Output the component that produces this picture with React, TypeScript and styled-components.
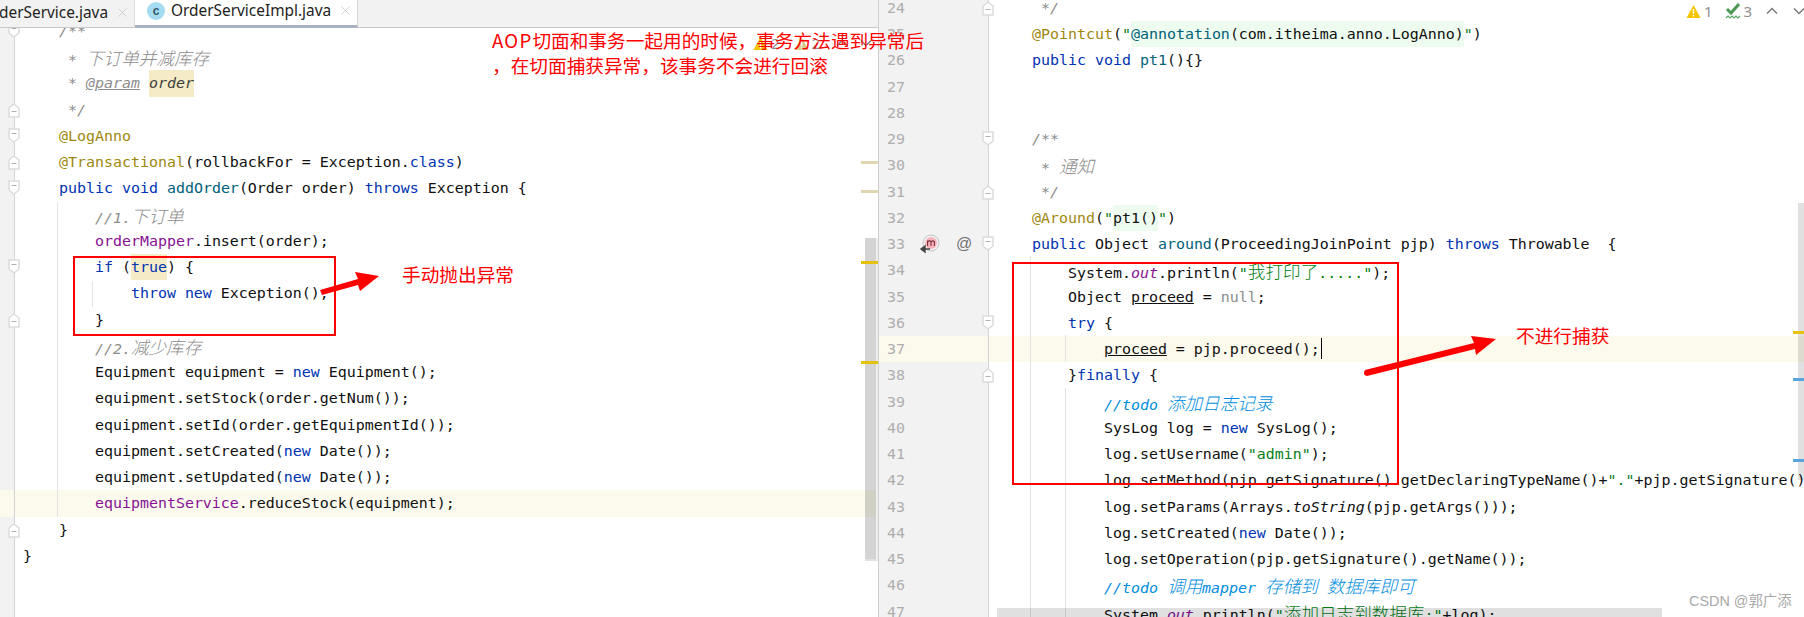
import React from "react";
import styled, { createGlobalStyle } from "styled-components";
import { X } from "lucide-react";

const LINE = 26.25;

const GlobalStyle = createGlobalStyle`
  html, body {
    margin: 0;
    padding: 0;
    background: #fff;
    overflow: hidden;
  }
`;

const Page = styled.div`
  position: relative;
  display: flex;
  width: 1804px;
  height: 617px;
  overflow: hidden;
  background: #fff;
`;

const LeftPane = styled.section`
  position: relative;
  display: flex;
  flex-direction: column;
  width: 878px;
  height: 100%;
`;

const RightPane = styled.section`
  position: relative;
  flex: 1;
  height: 100%;
  overflow: hidden;
`;

const TabBar = styled.div`
  display: flex;
  flex: none;
  height: 27px;
  background: #f2f2f2;
  border-bottom: 1px solid #c9c9c9;
  font-family: "Noto Sans", sans-serif;
  font-size: 15.4px;
  color: #222;
`;

const Tab = styled.div<{ $active?: boolean }>`
  display: flex;
  align-items: center;
  box-sizing: border-box;
  height: 28px;
  margin-left: ${(p) => (p.$active ? "0" : "-1px")};
  padding: ${(p) => (p.$active ? "0 0 4px 12px" : "0 8px 4px 0")};
  width: ${(p) => (p.$active ? "223px" : "136px")};
  background: ${(p) => (p.$active ? "#fff" : "transparent")};
  border-bottom: ${(p) => (p.$active ? "3px solid #a9b3bf" : "none")};
  border-right: ${(p) => (p.$active ? "1px solid #d4d4d4" : "1px solid #dcdcdc")};
  white-space: nowrap;
`;

const TabIcon = styled.span`
  display: flex;
  align-items: center;
  justify-content: center;
  width: 18px;
  height: 18px;
  margin-right: 6px;
  border-radius: 50%;
  background: #a6dcef;
  color: #33566b;
  font-family: "Liberation Sans", sans-serif;
  font-size: 12px;
  font-weight: 700;
`;

const TabClose = styled(X)`
  flex: none;
  margin-left: 7px;
  color: #c4c4c4;
`;

const Editor = styled.div`
  flex: 1;
  overflow: hidden;
`;

const Lines = styled.div<{ $offset: number }>`
  margin-top: ${(p) => p.$offset}px;
  font-family: "DejaVu Sans Mono", "Noto Sans CJK SC", monospace;
  font-size: 14.95px;
  color: #101010;
`;

const Row = styled.div<{ $current?: boolean }>`
  display: flex;
  height: ${LINE}px;
  line-height: ${LINE + 1.5}px;
  background: ${(p) => (p.$current ? "#fcfaed" : "#fff")};
  white-space: pre;
`;

const Gutter = styled.div<{ $width: number; $current?: boolean }>`
  position: relative;
  flex: none;
  box-sizing: border-box;
  width: ${(p) => p.$width}px;
  padding-left: 8px;
  background: ${(p) => (p.$current ? "#fcfaed" : "#f2f2f2")};
  border-right: 1px solid #d4d4d4;
  color: #aeaeae;
`;

const RightGutter = styled(Gutter)`
  border-left: 1px solid #d0d0d0;
`;

const Code = styled.div<{ $left: number }>`
  position: relative;
  flex: 1;
  min-width: 0;
  height: ${LINE}px;
  padding-left: ${(p) => p.$left}px;
  overflow: hidden;
`;

const Fold = styled.svg`
  position: absolute;
  right: -7px;
  top: 5px;
  width: 14px;
  height: 16px;
`;

const MethodMark = styled.svg`
  position: absolute;
  left: 40px;
  top: 2px;
  width: 22px;
  height: 22px;
`;

const AtMark = styled.span`
  position: absolute;
  left: 77px;
  top: -1px;
  color: #707070;
  font-family: "Liberation Sans", sans-serif;
  font-size: 16px;
`;

const Guide = styled.div<{ $left: number; $top: number; $height: number }>`
  position: absolute;
  left: ${(p) => p.$left}px;
  top: ${(p) => p.$top}px;
  width: 1px;
  height: ${(p) => p.$height}px;
  background: #e4e4e4;
`;

const Keyword = styled.span`
  color: #0033b3;
`;
const Annotation = styled.span`
  color: #9e880d;
`;
const Str = styled.span`
  color: #067d17;
`;
const Comment = styled.span`
  color: #8c8c8c;
  font-style: italic;
`;
const Todo = styled.span`
  color: #008dde;
  font-style: italic;
`;
const Field = styled.span`
  color: #871094;
`;
const Method = styled.span`
  color: #00627a;
`;
const Muted = styled.span`
  color: #8c8c8c;
`;
const StaticCall = styled.span`
  font-style: italic;
`;
const StaticField = styled.span`
  color: #871094;
  font-style: italic;
`;
const DocTag = styled.span`
  color: #8c8c8c;
  font-style: italic;
  text-decoration: underline;
`;
const DocParam = styled.span`
  display: inline-block;
  background: #f5ebc6;
  color: #3d3d3d;
  font-style: italic;
`;
const Match = styled.span`
  display: inline-block;
  background: #f5ebc6;
`;
const Injected = styled.span`
  display: inline-block;
  background: #edfcee;
`;
const Underlined = styled.span`
  text-decoration: underline;
`;
const Han = styled.span`
  font-family: "Noto Sans CJK SC", sans-serif;
  font-size: 17.6px;
  font-weight: 300;
`;
const Caret = styled.span`
  display: inline-block;
  width: 1px;
  height: 21px;
  margin-left: 1px;
  vertical-align: -5px;
  background: #000;
`;

const ScrollThumb = styled.div`
  position: absolute;
  left: 865px;
  top: 238px;
  box-sizing: border-box;
  width: 13px;
  height: 323px;
  background: rgba(0, 0, 0, 0.17);
  background-clip: padding-box;
  border-right: 2px solid #eee;
  border-bottom: 2px solid #e2e2e2;
`;

const RightThumb = styled.div`
  position: absolute;
  right: 0;
  top: 203px;
  width: 6px;
  height: 277px;
  background: rgba(0, 0, 0, 0.12);
`;

const BottomThumb = styled.div`
  position: absolute;
  left: 119px;
  bottom: 0;
  width: 665px;
  height: 9px;
  background: rgba(0, 0, 0, 0.12);
`;

const StripeMark = styled.div<{ $left: number; $top: number; $width: number; $color: string }>`
  position: absolute;
  left: ${(p) => p.$left}px;
  top: ${(p) => p.$top}px;
  width: ${(p) => p.$width}px;
  height: 3px;
  background: ${(p) => p.$color};
`;

const Inspections = styled.div<{ $left: number; $top: number }>`
  position: absolute;
  left: ${(p) => p.$left}px;
  top: ${(p) => p.$top}px;
  display: flex;
  align-items: center;
  height: 20px;
  font-family: "Noto Sans", sans-serif;
  font-size: 15px;
  color: #8f8f8f;
`;

const Count = styled.span<{ $gap: number }>`
  margin: 0 ${(p) => p.$gap}px 0 3px;
`;

const RedBox = styled.div<{ $left: number; $top: number; $width: number; $height: number }>`
  position: absolute;
  left: ${(p) => p.$left}px;
  top: ${(p) => p.$top}px;
  box-sizing: border-box;
  width: ${(p) => p.$width}px;
  height: ${(p) => p.$height}px;
  border: 2px solid #f00;
`;

const RedNote = styled.div<{ $left: number; $top: number }>`
  position: absolute;
  left: ${(p) => p.$left}px;
  top: ${(p) => p.$top}px;
  color: #f00;
  font-family: "Noto Sans CJK SC", sans-serif;
  font-size: 18.67px;
  line-height: 25px;
  white-space: pre;
`;

const Latin = styled.span`
  letter-spacing: 1.2px;
`;

const ArrowLayer = styled.svg`
  position: absolute;
  left: 0;
  top: 0;
  width: 1804px;
  height: 617px;
  pointer-events: none;
`;

const Watermark = styled.div`
  position: absolute;
  left: 1689px;
  top: 591px;
  color: #a9a9a9;
  font-family: "Liberation Sans", "Noto Sans CJK SC", sans-serif;
  font-size: 14.4px;
  line-height: 20px;
  white-space: pre;
`;

const FoldIcon = ({ up }: { up?: boolean }) => (
  <Fold viewBox="0 0 14 16">
    <path
      d={up ? "M2 15V6l5-4 5 4v9z" : "M2 1v9l5 4 5-4V1z"}
      fill="#fff"
      stroke="#dcdcdc"
      strokeWidth="1.5"
    />
    <path d={up ? "M4.5 9.5h5" : "M4.5 5.5h5"} stroke="#b0b0b0" />
  </Fold>
);

const WarningIcon = ({ color = "#f4c400" }: { color?: string }) => (
  <svg width="15" height="15" viewBox="0 0 15 15">
    <path d="M7.5 1 14.5 14H.5z" fill={color} />
    <path d="M7.5 5v5M7.5 11v1.5" stroke="#fff" strokeWidth="1.4" />
  </svg>
);

const TypoIcon = () => (
  <svg width="16" height="18" viewBox="0 0 16 18">
    <path d="M2 7l4 4 8-9" fill="none" stroke="#4c9a55" strokeWidth="3" />
    <path d="M1 16l2-2 2 2 2-2 2 2 2-2 2 2 2-2" fill="none" stroke="#59a869" strokeWidth="1.2" />
  </svg>
);

const Chevron = ({ down, gap }: { down?: boolean; gap: number }) => (
  <svg width="12" height="8" viewBox="0 0 12 8" style={{ marginRight: gap }}>
    <path d={down ? "M1 1.5l5 5 5-5" : "M1 6.5l5-5 5 5"} fill="none" stroke="#7a7a7a" strokeWidth="1.5" />
  </svg>
);

type LeftLine = { code?: React.ReactNode; fold?: "up" | "down"; current?: boolean };

const leftLines: LeftLine[] = [
  { code: <Comment>{"    /**"}</Comment>, fold: "down" },
  { code: <Comment>{"     * "}<Han>下订单并减库存</Han></Comment> },
  { code: <Comment>{"     * "}<DocTag>@param</DocTag> <DocParam>order</DocParam></Comment> },
  { code: <Comment>{"     */"}</Comment>, fold: "up" },
  { code: <Annotation>{"    @LogAnno"}</Annotation>, fold: "down" },
  { code: <>{"    "}<Annotation>@Transactional</Annotation>(rollbackFor = Exception.<Keyword>class</Keyword>)</>, fold: "up" },
  { code: <>{"    "}<Keyword>public void</Keyword> <Method>addOrder</Method>(Order order) <Keyword>throws</Keyword> Exception {"{"}</>, fold: "down" },
  { code: <Comment>{"        //1."}<Han>下订单</Han></Comment> },
  { code: <>{"        "}<Field>orderMapper</Field>.insert(order);</> },
  { code: <>{"        "}<Keyword>if</Keyword> (<Match><Keyword>true</Keyword></Match>) {"{"}</>, fold: "down" },
  { code: <>{"            "}<Keyword>throw new</Keyword> Exception();</> },
  { code: <>{"        }"}</>, fold: "up" },
  { code: <Comment>{"        //2."}<Han>减少库存</Han></Comment> },
  { code: <>{"        Equipment equipment = "}<Keyword>new</Keyword> Equipment();</> },
  { code: <>{"        equipment.setStock(order.getNum());"}</> },
  { code: <>{"        equipment.setId(order.getEquipmentId());"}</> },
  { code: <>{"        equipment.setCreated("}<Keyword>new</Keyword> Date());</> },
  { code: <>{"        equipment.setUpdated("}<Keyword>new</Keyword> Date());</> },
  { code: <>{"        "}<Field>equipmentService</Field>.reduceStock(equipment);</>, current: true },
  { code: <>{"    }"}</>, fold: "up" },
  { code: <>{"}"}</> },
  {},
  {},
];

type RightLine = { n: number; code?: React.ReactNode; fold?: "up" | "down"; current?: boolean; marks?: boolean };

const rightLines: RightLine[] = [
  { n: 24, code: <Comment>{"     */"}</Comment>, fold: "up" },
  { n: 25, code: <>{"    "}<Annotation>@Pointcut</Annotation>(<Str>"</Str><Injected><Method>@annotation</Method>(com.itheima.anno.LogAnno)</Injected><Str>"</Str>)</> },
  { n: 26, code: <>{"    "}<Keyword>public void</Keyword> <Method>pt1</Method>(){"{}"}</> },
  { n: 27 },
  { n: 28 },
  { n: 29, code: <Comment>{"    /**"}</Comment>, fold: "down" },
  { n: 30, code: <Comment>{"     * "}<Han>通知</Han></Comment> },
  { n: 31, code: <Comment>{"     */"}</Comment>, fold: "up" },
  { n: 32, code: <>{"    "}<Annotation>@Around</Annotation>(<Str>"</Str><Injected>pt1()</Injected><Str>"</Str>)</> },
  { n: 33, code: <>{"    "}<Keyword>public</Keyword> Object <Method>around</Method>(ProceedingJoinPoint pjp) <Keyword>throws</Keyword> Throwable  {"{"}</>, fold: "down", marks: true },
  { n: 34, code: <>{"        System."}<StaticField>out</StaticField>.println(<Str>"<Han>我打印了</Han>....."</Str>);</> },
  { n: 35, code: <>{"        Object "}<Underlined>proceed</Underlined> = <Muted>null</Muted>;</> },
  { n: 36, code: <>{"        "}<Keyword>try</Keyword> {"{"}</>, fold: "down" },
  { n: 37, code: <>{"            "}<Underlined>proceed</Underlined> = pjp.proceed();<Caret /></>, current: true },
  { n: 38, code: <>{"        }"}<Keyword>finally</Keyword> {"{"}</>, fold: "up" },
  { n: 39, code: <Todo>{"            //todo "}<Han>添加日志记录</Han></Todo> },
  { n: 40, code: <>{"            SysLog log = "}<Keyword>new</Keyword> SysLog();</> },
  { n: 41, code: <>{"            log.setUsername("}<Str>"admin"</Str>);</> },
  { n: 42, code: <>{"            log.setMethod(pjp.getSignature().getDeclaringTypeName()+"}<Str>"."</Str>+pjp.getSignature().getName());</> },
  { n: 43, code: <>{"            log.setParams(Arrays."}<StaticCall>toString</StaticCall>(pjp.getArgs()));</> },
  { n: 44, code: <>{"            log.setCreated("}<Keyword>new</Keyword> Date());</> },
  { n: 45, code: <>{"            log.setOperation(pjp.getSignature().getName());"}</> },
  { n: 46, code: <Todo>{"            //todo "}<Han>调用</Han>mapper <Han>存储到</Han> <Han>数据库即可</Han></Todo> },
  { n: 47, code: <>{"            System."}<StaticField>out</StaticField>.println(<Str>"<Han>添加日志到数据库</Han>:"</Str>+log);</> },
];

const App = () => {
  return (
    <Page>
      <GlobalStyle />
      <LeftPane>
        <TabBar>
          <Tab>
            <span>derService.java</span>
            <TabClose size={15} strokeWidth={1.2} />
          </Tab>
          <Tab $active>
            <TabIcon>c</TabIcon>
            <span>OrderServiceImpl.java</span>
            <TabClose size={15} strokeWidth={1.2} />
          </Tab>
        </TabBar>
        <Editor>
          <Lines $offset={-10.1}>
            {leftLines.map((line, i) => (
              <Row key={i} $current={line.current}>
                <Gutter $width={15} $current={line.current}>
                  {line.fold && <FoldIcon up={line.fold === "up"} />}
                </Gutter>
                <Code $left={8}>{line.code}</Code>
              </Row>
            ))}
          </Lines>
        </Editor>
        <Guide $left={57} $top={202} $height={315} />
        <Guide $left={92} $top={281} $height={26} />
        <Inspections $left={753} $top={33}>
          <WarningIcon />
          <Count $gap={14}>2</Count>
          <WarningIcon color="#d8c98a" />
          <Count $gap={16}>2</Count>
          <Chevron gap={12} />
          <Chevron down gap={0} />
        </Inspections>
        <ScrollThumb />
        <StripeMark $left={861} $top={161} $width={17} $color="#dfd7b2" />
        <StripeMark $left={861} $top={190} $width={17} $color="#dfd7b2" />
        <StripeMark $left={861} $top={261} $width={17} $color="#e6c20f" />
        <StripeMark $left={861} $top={361} $width={17} $color="#e6c20f" />
      </LeftPane>
      <RightPane>
        <Lines $offset={-5.1}>
          {rightLines.map((line) => (
            <Row key={line.n} $current={line.current}>
              <RightGutter $width={111} $current={line.current}>
                {line.n}
                {line.marks && (
                  <>
                    <MethodMark viewBox="0 0 22 22">
                      <circle cx="12" cy="10" r="8" fill="#f2f2f2" stroke="#c4c4c4" strokeWidth="1" />
                      <circle cx="12" cy="10" r="6" fill="#f7b4bf" />
                      <path d="M8.6 13V7.6M8.6 8.6q1.7-1.6 3.4 0V13M12 8.6q1.7-1.6 3.4 0V13" fill="none" stroke="#7a2d38" strokeWidth="1.1" />
                      <path d="M2 16h9M6 13 2 16l4 3z" fill="#444" stroke="#444" strokeWidth="1.4" />
                    </MethodMark>
                    <AtMark>@</AtMark>
                  </>
                )}
                {line.fold && <FoldIcon up={line.fold === "up"} />}
              </RightGutter>
              <Code $left={7}>{line.code}</Code>
            </Row>
          ))}
        </Lines>
        <Guide $left={152} $top={256} $height={361} />
        <Guide $left={187} $top={335} $height={27} />
        <Guide $left={187} $top={388} $height={229} />
        <Inspections $left={808} $top={1}>
          <WarningIcon />
          <Count $gap={12}>1</Count>
          <TypoIcon />
          <Count $gap={14}>3</Count>
          <Chevron gap={15} />
          <Chevron down gap={0} />
        </Inspections>
        <RightThumb />
        <StripeMark $left={915} $top={331} $width={11} $color="#e6c20f" />
        <StripeMark $left={915} $top={378} $width={11} $color="#5aa5dc" />
        <StripeMark $left={915} $top={459} $width={11} $color="#5aa5dc" />
        <BottomThumb />
      </RightPane>
      <RedBox $left={73} $top={256} $width={263} $height={80} />
      <RedBox $left={1012} $top={262} $width={387} $height={223} />
      <ArrowLayer viewBox="0 0 1804 617">
        <path d="M320 290 L358 279 L355 272 L379 276 L360 291 L358 285 L322 295 Z" fill="#f00" />
        <path d="M1365 370 L1474 343 L1471 336 L1496 339 L1476 355 L1475 349 L1367 376 Q1362 375 1365 370 Z" fill="#f00" />
      </ArrowLayer>
      <RedNote $left={492} $top={27}><Latin>AOP</Latin>{"切面和事务一起用的时候，事务方法遇到异常后\n，在切面捕获异常，该事务不会进行回滚"}</RedNote>
      <RedNote $left={402} $top={261}>手动抛出异常</RedNote>
      <RedNote $left={1516} $top={322}>不进行捕获</RedNote>
      <Watermark>CSDN @郭广添</Watermark>
    </Page>
  );
};

export default App;
